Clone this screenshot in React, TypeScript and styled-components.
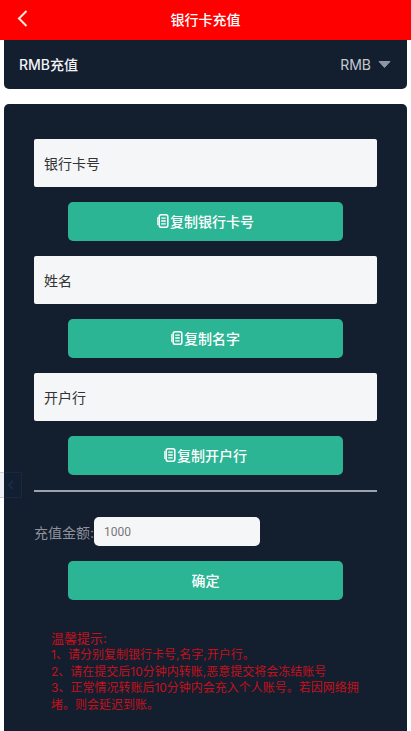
import styled, { createGlobalStyle } from "styled-components";

const GlobalStyle = createGlobalStyle`
  html, body {
    margin: 0;
    padding: 0;
    background: #fff;
    font-family: Inter, "Noto Sans CJK SC", sans-serif;
  }
`;

const Page = styled.div`
  position: relative;
  width: 411px;
  height: 731px;
  overflow: hidden;
`;

const Header = styled.header`
  position: relative;
  height: 40px;
  padding-bottom: 2px;
  box-sizing: border-box;
  background: #ff0000;
  display: flex;
  align-items: center;
  justify-content: center;
  color: #fff;
  font-size: 14px;
  font-weight: 500;
`;

const BackIcon = styled.svg`
  position: absolute;
  left: 16px;
  top: 9px;
`;

const TopCard = styled.div`
  margin: 0 4px;
  height: 49px;
  background: #131e2f;
  border-radius: 0 0 5px 5px;
  display: flex;
  align-items: center;
  justify-content: space-between;
  padding: 0 16px 1px 15px;
  box-sizing: border-box;
`;

const TopTitle = styled.span`
  color: #f1f3f5;
  font-size: 14px;
  font-weight: 500;
`;

const Currency = styled.span`
  display: flex;
  align-items: center;
  gap: 7px;
  color: #c3c8d0;
  font-size: 14px;
`;

const Caret = styled.svg`
  flex: none;
`;

const FormCard = styled.section`
  margin: 15px 4px 0;
  height: 640px;
  background: #131e2f;
  border-radius: 5px 5px 0 0;
  padding: 35px 30px 0;
  box-sizing: border-box;
  display: flex;
  flex-direction: column;
`;

const Field = styled.div`
  height: 48px;
  flex: none;
  background: #f5f6f8;
  border-radius: 2px;
  display: flex;
  align-items: center;
  padding-left: 10px;
  color: #333;
  font-size: 14px;
`;

const GreenButton = styled.button`
  flex: none;
  display: flex;
  align-items: center;
  justify-content: center;
  width: 275px;
  height: 39px;
  margin: 15px 34px;
  padding: 0 0 2px;
  border: none;
  border-radius: 5px;
  background: #2cb594;
  color: #fff;
  font-family: inherit;
  font-size: 14px;
  font-weight: 500;
`;

const CopyGlyph = styled.svg`
  flex: none;
  margin-right: 1px;
`;

const Divider = styled.hr`
  flex: none;
  width: 100%;
  height: 2px;
  margin: 0;
  border: none;
  background: #9fa2aa;
`;

const AmountRow = styled.div`
  display: flex;
  align-items: center;
  margin-top: 25px;
  height: 29px;
  color: #8e929a;
  font-size: 14px;
`;

const AmountLabel = styled.span`
  width: 60px;
  flex: none;
  white-space: nowrap;
  overflow: hidden;
`;

const AmountInput = styled.div`
  width: 156px;
  height: 29px;
  padding-left: 10px;
  background: #f5f6f8;
  border-radius: 5px;
  display: flex;
  align-items: center;
  color: #777;
  font-size: 12px;
  font-family: Roboto, sans-serif;
`;

const Tips = styled.div`
  margin: 14px 0 0 17px;
  width: 310px;
  color: #c4111b;
  font-size: 12px;
  line-height: 16.6px;
`;

const TipsTitle = styled.div`
  font-size: 13px;
  line-height: 18px;
`;

const SideTab = styled.div`
  position: absolute;
  left: 0;
  top: 472px;
  width: 22px;
  height: 26px;
  box-sizing: border-box;
  border: 1px solid rgba(60, 80, 110, 0.2);
  border-left: none;
  background: rgba(20, 60, 120, 0.07);
  display: flex;
  align-items: center;
  justify-content: center;
`;

const CopyIcon = () => (
  <CopyGlyph width="12" height="14" viewBox="0 0 12 14" fill="none">
    <rect x="2.2" y="0.8" width="8.6" height="12.4" rx="2" stroke="#fff" strokeWidth="1.6" />
    <path d="M4.2 4.2H8.8M4.2 7H8.8M4.2 9.8H8.8" stroke="#fff" strokeWidth="1.3" />
    <path d="M0.8 3V11" stroke="#fff" strokeWidth="1.1" />
  </CopyGlyph>
);

export default function App() {
  return (
    <Page>
      <GlobalStyle />
      <Header>
        <BackIcon width="13" height="19" viewBox="0 0 13 19" fill="none">
          <path d="M10.5 2L3 9.5L10.5 17" stroke="#ffe9e0" strokeWidth="2" />
        </BackIcon>
        银行卡充值
      </Header>
      <TopCard>
        <TopTitle>RMB充值</TopTitle>
        <Currency>
          RMB
          <Caret width="13" height="7" viewBox="0 0 13 7">
            <path d="M1 0.5H12L6.5 6.5Z" fill="#8d94a3" stroke="#8d94a3" strokeLinejoin="round" />
          </Caret>
        </Currency>
      </TopCard>
      <FormCard>
        <Field>银行卡号</Field>
        <GreenButton>
          <CopyIcon />
          复制银行卡号
        </GreenButton>
        <Field>姓名</Field>
        <GreenButton>
          <CopyIcon />
          复制名字
        </GreenButton>
        <Field>开户行</Field>
        <GreenButton>
          <CopyIcon />
          复制开户行
        </GreenButton>
        <Divider />
        <AmountRow>
          <AmountLabel>充值金额:</AmountLabel>
          <AmountInput>1000</AmountInput>
        </AmountRow>
        <GreenButton>确定</GreenButton>
        <Tips>
          <TipsTitle>温馨提示:</TipsTitle>
          <div>1、请分别复制银行卡号,名字,开户行。</div>
          <div>2、请在提交后10分钟内转账,恶意提交将会冻结账号</div>
          <div>3、正常情况转账后10分钟内会充入个人账号。若因网络拥堵。则会延迟到账。</div>
        </Tips>
      </FormCard>
      <SideTab>
        <svg width="10" height="10" viewBox="0 0 10 10" fill="none">
          <path d="M7 1L3 5L7 9" stroke="#1a2f4e" strokeWidth="1.5" />
        </svg>
      </SideTab>
    </Page>
  );
}
